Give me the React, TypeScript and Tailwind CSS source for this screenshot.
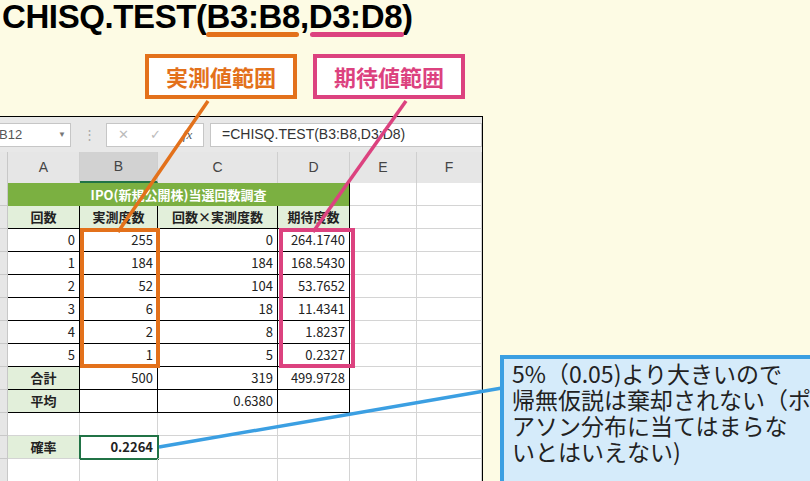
import React from "react";

const jp = { fontFamily: '"Noto Sans CJK JP", "Liberation Sans", sans-serif' };
const W = ["w-[72px]", "w-[78px]", "w-[120px]", "w-[72px]", "w-[67px]", "w-[65px]"];

const data: [string, string, string, string][] = [
  ["0", "255", "0", "264.1740"],
  ["1", "184", "184", "168.5430"],
  ["2", "52", "104", "53.7652"],
  ["3", "6", "18", "11.4341"],
  ["4", "2", "8", "1.8237"],
  ["5", "1", "5", "0.2327"],
];

function Cell({ i, children, className = "" }: { i: number; children?: React.ReactNode; className?: string }) {
  return (
    <div className={`${W[i]} h-full shrink-0 border-r border-b border-[#d4d4d4] flex items-center justify-end px-1 text-[13px] text-[#222] ${className}`}>
      {children}
    </div>
  );
}

function Row({ children }: { children: React.ReactNode }) {
  return (
    <div className="flex h-[23px]">
      <div className="w-[8px] shrink-0 bg-[#e6e6e6] border-r border-b border-[#c8c8c8]" />
      {children}
    </div>
  );
}

export default function App() {
  return (
    <div className="relative w-[810px] h-[481px] overflow-hidden bg-[#fdfbe4]" style={{ fontFamily: '"Liberation Sans", sans-serif' }}>
      <div className="pl-[2px] text-[33px] font-bold leading-[34px] text-black tracking-[-0.4px] whitespace-nowrap">
        CHISQ.TEST(B3:B8,D3:D8)
      </div>
      <div className="flex h-[6px] mt-[-2px]">
        <div className="ml-[206px] w-[93px] h-[5px] rounded-full bg-[#e3711b]" />
        <div className="ml-[11px] w-[94px] h-[5px] rounded-full bg-[#dc427f]" />
      </div>

      <div className="flex mt-[16px] h-[45px]" style={jp}>
        <div className="ml-[145px] w-[152px] border-[4px] border-[#e3711b] bg-white flex items-center justify-center text-[22px] font-bold text-[#e3711b]">実測値範囲</div>
        <div className="ml-[16px] w-[152px] border-[4px] border-[#dc427f] bg-white flex items-center justify-center text-[22px] font-bold text-[#dc427f]">期待値範囲</div>
      </div>

      <div className="mt-[17px] w-[483px] border-t border-r border-black bg-white">
        <div className="h-[35px] bg-[#e8e8e8] flex items-center text-[13px] text-[#555]">
          <div className="w-[77px] h-[24px] bg-white border border-[#c6c6c6] flex items-center justify-between pr-1 ml-[-6px]">
            <span className="pl-1">B12</span><span className="text-[8px] text-[#777]">▼</span>
          </div>
          <span className="ml-[12px] text-[#aaa]">⋮</span>
          <div className="ml-[10px] w-[98px] h-[24px] bg-white border border-[#c6c6c6] flex items-center justify-around text-[#bbb]">
            <span>✕</span><span>✓</span><span className="italic text-[#555]" style={{ fontFamily: '"Liberation Serif", serif' }}>fx</span>
          </div>
          <div className="ml-[6px] flex-1 h-[24px] bg-white border border-[#c6c6c6] flex items-center pl-[11px] text-[14px] text-[#333]">=CHISQ.TEST(B3:B8,D3:D8)</div>
        </div>
        <div className="flex h-[31px] bg-[#e6e6e6] text-[14px] text-[#444]">
          <div className="w-[8px] shrink-0 border-r border-[#c8c8c8]" />
          {["A", "B", "C", "D", "E", "F"].map((c, i) => (
            <div key={c} className={`${W[i]} shrink-0 flex items-center justify-center border-r border-[#cfcfcf] ${c === "B" ? "bg-[#d2d2d2] border-b-2 border-b-[#217346]" : ""}`}>{c}</div>
          ))}
        </div>
        <div style={jp}>
          <Row>
            <div className="w-[342px] shrink-0 h-full bg-[#7bb041] text-white font-bold text-[13px] flex items-center justify-center border-r border-black">IPO(新規公開株)当選回数調査</div>
            <Cell i={4} /><Cell i={5} />
          </Row>
          <Row>
            {["回数", "実測度数", "回数×実測度数", "期待度数"].map((t, i) => (
              <Cell key={t} i={i} className="!justify-center bg-[#e2efda] font-bold !border-black">{t}</Cell>
            ))}
            <Cell i={4} /><Cell i={5} />
          </Row>
          {data.map((r) => (
            <Row key={r[0]}>
              {r.map((v, i) => <Cell key={i} i={i} className="!border-black">{v}</Cell>)}
              <Cell i={4} /><Cell i={5} />
            </Row>
          ))}
          <Row>
            <Cell i={0} className="!justify-center bg-[#e2efda] font-bold !border-black">合計</Cell>
            <Cell i={1} className="!border-black">500</Cell>
            <Cell i={2} className="!border-black">319</Cell>
            <Cell i={3} className="!border-black">499.9728</Cell>
            <Cell i={4} /><Cell i={5} />
          </Row>
          <Row>
            <Cell i={0} className="!justify-center bg-[#e2efda] font-bold !border-black">平均</Cell>
            <Cell i={1} className="!border-black" />
            <Cell i={2} className="!border-black">0.6380</Cell>
            <Cell i={3} className="!border-black" />
            <Cell i={4} /><Cell i={5} />
          </Row>
          <Row>{[0, 1, 2, 3, 4, 5].map((i) => <Cell key={i} i={i} />)}</Row>
          <Row>
            <Cell i={0} className="!justify-center bg-[#e2efda] font-bold">確率</Cell>
            <Cell i={1} className="font-bold outline-2 outline-[#217346] -outline-offset-1">0.2264</Cell>
            <Cell i={2} /><Cell i={3} /><Cell i={4} /><Cell i={5} />
          </Row>
          <Row>{[0, 1, 2, 3, 4, 5].map((i) => <Cell key={i} i={i} />)}</Row>
        </div>
      </div>

      {/* range highlights */}
      <div className="absolute left-[80px] top-[228px] w-[80px] h-[140px] border-[4px] border-[#e3711b]" />
      <div className="absolute left-[279px] top-[228px] w-[76px] h-[140px] border-[4px] border-[#dc427f]" />

      <svg className="absolute inset-0 pointer-events-none" width="810" height="481">
        <line x1="208" y1="101" x2="118" y2="232" stroke="#e3711b" strokeWidth="3.5" />
        <line x1="406" y1="101" x2="313" y2="232" stroke="#dc427f" strokeWidth="3.5" />
        <line x1="159" y1="447" x2="502" y2="388" stroke="#3b9fe2" strokeWidth="3.5" />
      </svg>

      <div className="absolute left-[500px] top-[355px] w-[330px] h-[140px] border-[4px] border-[#3b9fe2] bg-[#d5ebfa] pl-[8px] pt-[1px] text-[23px] leading-[26px] text-[#222] whitespace-nowrap" style={jp}>
        <div>5%（0.05)より大きいので</div>
        <div>帰無仮説は棄却されない（ポ</div>
        <div>アソン分布に当てはまらな</div>
        <div>いとはいえない)</div>
      </div>
    </div>
  );
}
